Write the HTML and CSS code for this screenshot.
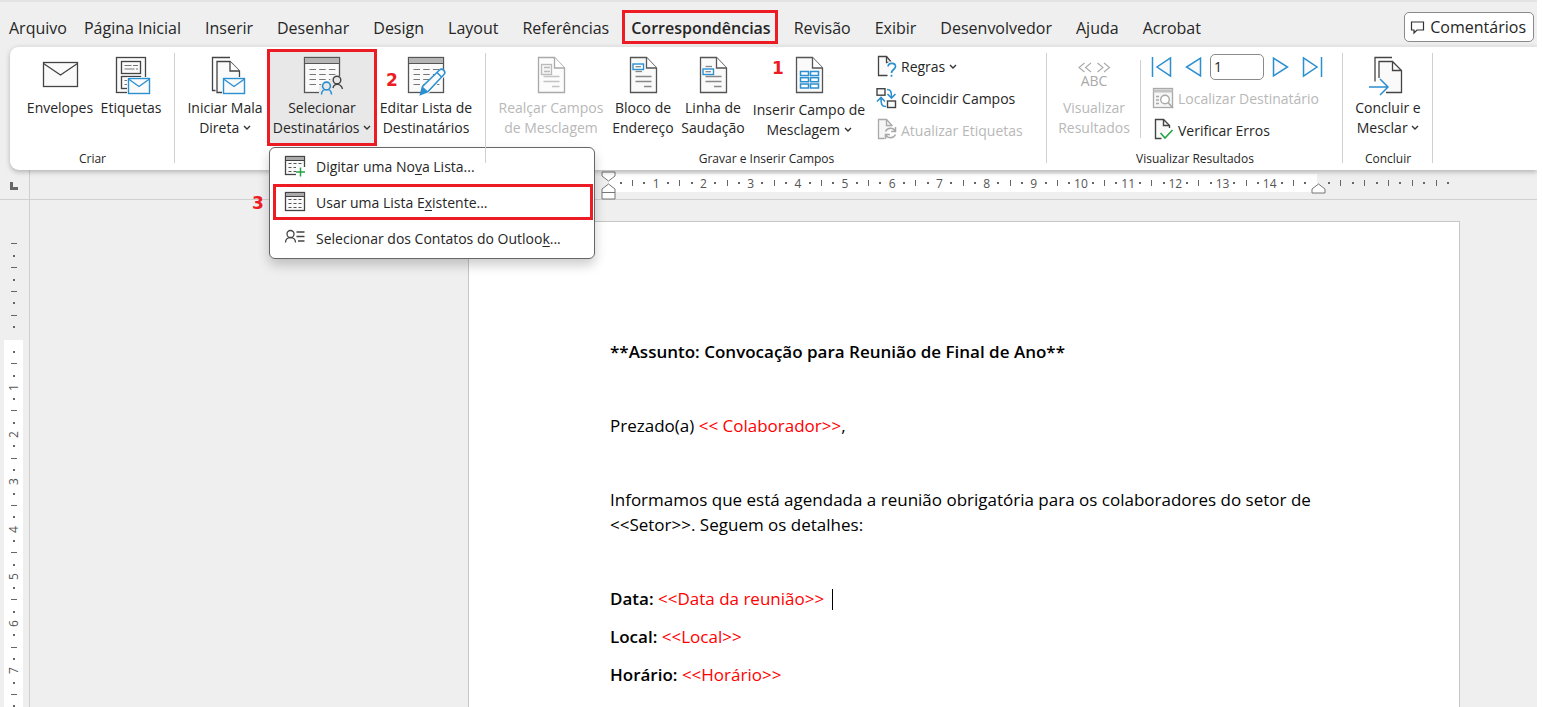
FILE: index.html
```html
<!DOCTYPE html>
<html lang="pt-BR">
<head>
<meta charset="utf-8">
<title>Correspondências</title>
<link rel="stylesheet" href="styles.css">
</head>
<body>
<svg class="defs" aria-hidden="true">
  <symbol id="chevron" viewBox="0 0 8 6"><path d="M1 1l3 3 3-3" fill="none" stroke="#333" stroke-width="1.4"/></symbol>
  <symbol id="mail" viewBox="0 0 24 18"><rect x="0" y="0" width="24" height="18" fill="#fff"/><rect x="1.5" y="1.5" width="21" height="15" fill="#fafafa" stroke="#2b8fd0" stroke-width="1.4"/><path d="M1.5 2l10.500 7.500L22.500 2" fill="none" stroke="#2b8fd0" stroke-width="1.400"/></symbol>
  <symbol id="sheet" viewBox="0 0 40 40"><path d="M7.500 1.500h16l10 10.500v24.500h-26z" fill="#fafafa" stroke="#555" stroke-width="1.300"/><path d="M23.500 1.500V12h10" fill="#fff" stroke="#555" stroke-width="1.300"/></symbol>
  <symbol id="sheet-lines" viewBox="0 0 40 40"><path d="M12.500 20.500h16M12.500 25.500h16M21 30.500h7.500" stroke="#888" stroke-width="1.300"/></symbol>
  <symbol id="grid" viewBox="0 0 40 40"><rect x="2.500" y="1.500" width="35" height="35" fill="#fafafa" stroke="#555" stroke-width="1.300"/><path d="M3 4.500h34" stroke="#b5b5b5" stroke-width="5"/><path d="M2.500 7.500h35" stroke="#555"/><path d="M7.500 13.500h26M7.500 18.500h26M7.500 23.500h26M7.500 28.500h26" stroke="#777" stroke-width="1.200" stroke-dasharray="6.500 3.200"/></symbol>
  <symbol id="grid-small" viewBox="0 0 22 22"><rect x="1.500" y="1.500" width="19" height="18" fill="#fafafa" stroke="#444" stroke-width="1.300"/><path d="M2 3.500h18" stroke="#aaa" stroke-width="3"/><path d="M1.500 5.500h19" stroke="#444"/><path d="M4.500 8.500h13M4.500 12.500h13M4.500 16.500h13" stroke="#555" stroke-width="1.200" stroke-dasharray="3 2"/></symbol>
</svg>

<div class="app">
  <header class="tabbar">
    <nav class="tabs">
      <button class="tab first">Arquivo</button>
      <button class="tab">Página Inicial</button>
      <button class="tab">Inserir</button>
      <button class="tab">Desenhar</button>
      <button class="tab">Design</button>
      <button class="tab">Layout</button>
      <button class="tab">Referências</button>
      <button class="tab active">Correspondências</button>
      <button class="tab">Revisão</button>
      <button class="tab">Exibir</button>
      <button class="tab">Desenvolvedor</button>
      <button class="tab">Ajuda</button>
      <button class="tab">Acrobat</button>
    </nav>
    <button class="comments"><svg width="15" height="15" viewBox="0 0 15 15"><path d="M1.500 2h12v8H7l-3 3v-3H1.500z" fill="none" stroke="#333" stroke-width="1.200"/></svg>Comentários</button>
  </header>

  <section class="ribbon">
    <div class="group">
      <div class="tools create">
        <button class="big w-env"><svg class="ico" viewBox="0 0 40 40"><rect x="3.500" y="6.500" width="34" height="24" fill="#fafafa" stroke="#444" stroke-width="1.300"/><path d="M3.500 7.500l17 11.500 17-11.500" fill="none" stroke="#444" stroke-width="1.300"/></svg><span>Envelopes</span></button>
        <button class="big w-lab"><svg class="ico" viewBox="0 0 40 40"><g fill="#fafafa" stroke="#444" stroke-width="1.300"><rect x="5.500" y="1.500" width="29" height="35"/><rect x="10.500" y="5.500" width="19" height="12"/><rect x="10.500" y="20.500" width="19" height="12"/></g><path d="M13.500 9.500h7M22 9.500h5M13.500 13h10M25 13h2M13.500 24.500h4M13.500 28.500h3" stroke="#777" stroke-width="1.200"/><use href="#mail" x="16" y="21" width="24" height="18"/></svg><span>Etiquetas</span></button>
      </div>
      <div class="caption">Criar</div>
    </div>

    <div class="group">
      <div class="tools start">
        <button class="big w-start"><svg class="ico" viewBox="0 0 40 40"><path d="M25 1.500H7.500v33h3" fill="none" stroke="#444" stroke-width="1.300"/><path d="M12 5.500h13l9.500 9.500v21.500H12z" fill="#fafafa" stroke="#444" stroke-width="1.300"/><path d="M25 5.500V15h9.500" fill="#fff" stroke="#444" stroke-width="1.300"/><use href="#mail" x="17" y="21" width="24" height="18"/></svg><span>Iniciar Mala<br>Direta <svg class="chev"><use href="#chevron"/></svg></span></button>
        <div class="dropdown">
          <button class="big w-sel marked"><svg class="ico" viewBox="0 0 40 40"><use href="#grid"/><path d="M17 40v-9l5-6h5l4-5h9v20z" fill="#e8e8e8"/><g fill="none" stroke="#444" stroke-width="1.400"><circle cx="35" cy="24" r="3.800"/><path d="M31 32c1-5 8-5 9.500 1"/></g><g fill="#e8e8e8" stroke="#2b8fd0" stroke-width="1.600"><path d="M19.500 38.500c0-7 10-7 10 0"/><circle cx="24.500" cy="30" r="3.900"/></g></svg><span>Selecionar<br>Destinatários <svg class="chev"><use href="#chevron"/></svg></span></button>
          <div class="menu">
            <button class="item"><svg class="mico" viewBox="0 0 22 22"><use href="#grid-small"/><path d="M12 12h10v10H12z" fill="#fff"/><path d="M16.500 12.500v9M12 17h9" stroke="#23a343" stroke-width="1.500"/></svg><span>Digitar uma No<u>v</u>a Lista...</span></button>
            <button class="item marked"><svg class="mico" viewBox="0 0 22 22"><use href="#grid-small"/></svg><span>Usar uma Lista E<u>x</u>istente...</span><b class="note n3">3</b></button>
            <button class="item"><svg class="mico" viewBox="0 0 22 22"><g fill="none" stroke="#444" stroke-width="1.300"><circle cx="6.500" cy="7" r="3.500"/><path d="M1.500 15.500c0-6.500 10-6.500 10 0M12.500 5h8M12.500 9.500h8M14 14h6.500"/></g></svg><span>Selecionar dos Contatos do Outloo<u>k</u>...</span></button>
          </div>
        </div>
        <button class="big w-edit"><svg class="ico" viewBox="0 0 40 40"><use href="#grid"/><path d="M14 39l3-9 16-16 7 0v5L23 37z" fill="#fff"/><path d="M14.500 38.500l2-8L33.500 14c3-2.500 7 2 4.500 4.500L22 35.500zM31 16.500l4.800 4.800" fill="#fafafa" stroke="#2b8fd0" stroke-width="1.500"/><path d="M14.500 38.500l2-8 5.500 5z" fill="#2b8fd0"/></svg><span>Editar Lista de<br>Destinatários</span><b class="note n2">2</b></button>
      </div>
      <div class="caption"></div>
    </div>

    <div class="group">
      <div class="tools write">
        <button class="big w-hl" disabled><svg class="ico faded" viewBox="0 0 40 40"><use href="#sheet"/><use href="#sheet-lines"/><rect x="10.500" y="8.500" width="10" height="10" fill="#eee" stroke="#777" stroke-width="1.300"/><path d="M13 11.500h6M13 15.500h6" stroke="#777" stroke-width="1.300"/></svg><span>Realçar Campos<br>de Mesclagem</span></button>
        <button class="big w-block"><svg class="ico" viewBox="0 0 40 40"><use href="#sheet"/><use href="#sheet-lines"/><path d="M12.500 15.500h6.500" stroke="#888" stroke-width="1.300"/><rect x="10" y="8" width="10.500" height="5.500" fill="#fff" stroke="#2b8fd0" stroke-width="1.400"/><path d="M12.500 10.700h5.500" stroke="#888" stroke-width="1.300"/></svg><span>Bloco de<br>Endereço</span></button>
        <button class="big w-block"><svg class="ico" viewBox="0 0 40 40"><use href="#sheet"/><use href="#sheet-lines"/><path d="M12.500 10.500h6.500" stroke="#888" stroke-width="1.300"/><rect x="10" y="13" width="10.500" height="5.500" fill="#fff" stroke="#2b8fd0" stroke-width="1.400"/><path d="M12.500 15.700h5.500" stroke="#888" stroke-width="1.300"/></svg><span>Linha de<br>Saudação</span></button>
        <button class="big w-field roomy"><svg class="ico" viewBox="0 0 40 40"><use href="#sheet"/><g fill="#fff" stroke="#2b8fd0" stroke-width="1.500"><rect x="11.500" y="15.500" width="8" height="4"/><rect x="21.500" y="15.500" width="8" height="4"/><rect x="11.500" y="21.700" width="8" height="4"/><rect x="21.500" y="21.700" width="8" height="4"/><rect x="11.500" y="28" width="8" height="4"/><rect x="21.500" y="28" width="8" height="4"/></g></svg><span>Inserir Campo de<br>Mesclagem <svg class="chev"><use href="#chevron"/></svg></span><b class="note n1">1</b></button>
        <div class="rows">
          <button class="row"><svg class="rico" viewBox="0 0 24 24"><path d="M18.500 8.500L12.500 1.500h-8v19h9" fill="#fafafa" stroke="#444" stroke-width="1.300"/><path d="M12.500 1.500v6h5" fill="none" stroke="#444" stroke-width="1.300"/><path d="M13.500 12c0-5 8-5 8-.5 0 3-4 3-4 6.500M17.500 19.500v2" fill="none" stroke="#fff" stroke-width="4"/><path d="M14 11.500c.5-4.500 7.500-4 7.500 0 0 3-4 3-4 6.500M17.500 19.800v2" fill="none" stroke="#2b8fd0" stroke-width="1.700"/></svg><span>Regras <svg class="chev"><use href="#chevron"/></svg></span></button>
          <button class="row"><svg class="rico" viewBox="0 0 24 24"><g fill="#fafafa" stroke="#444" stroke-width="1.400"><rect x="3" y="1.700" width="8" height="6.500"/><rect x="13.500" y="14" width="8" height="6.500"/></g><path d="M13 2.500c4 0 4.500 2.500 4.500 8M13.500 7l4 4 4-4M12 19.500c-4.500 0-5-2.500-5-8M3 14.500l4-4 4 4" fill="none" stroke="#2b8fd0" stroke-width="1.600"/></svg>Coincidir Campos</button>
          <button class="row" disabled><svg class="rico faded" viewBox="0 0 24 24"><path d="M18.500 8L12.500 1.500h-8v19h6" fill="#eee" stroke="#555" stroke-width="1.300"/><path d="M12.500 1.500v6h5" fill="none" stroke="#555" stroke-width="1.300"/><path d="M11.500 13.500c2-4.500 8-4 9.500-.5M21.500 9v4.500H17M21.500 16.500c-2 4.500-8 4-9.500.5M11.500 21v-4.500H16" fill="none" stroke="#555" stroke-width="1.500"/></svg>Atualizar Etiquetas</button>
        </div>
      </div>
      <div class="caption">Gravar e Inserir Campos</div>
    </div>

    <div class="group">
      <div class="tools view">
        <button class="big w-prev" disabled><svg class="ico" viewBox="0 0 40 40"><path d="M10.500 7L5 11.500l5.500 4.500M17 7l-5.500 4.500L17 16M23.500 7l5.500 4.500-5.500 4.500M30 7l5.500 4.500L30 16" fill="none" stroke="#aaa" stroke-width="1.100"/><text x="20" y="30" text-anchor="middle" class="abc">ABC</text></svg><span>Visualizar<br>Resultados</span></button>
        <i class="divider"></i>
        <div class="rows">
          <div class="record">
            <button aria-label="Primeiro registro"><svg width="21" height="22" viewBox="0 0 21 22"><path d="M1.500 1v20M19.500 2v18L6 11z" class="nav"/></svg></button>
            <button aria-label="Registro anterior"><svg width="17" height="22" viewBox="0 0 17 22"><path d="M15.500 2v18L1.500 11z" class="nav"/></svg></button>
            <input type="text" value="1" aria-label="Registro">
            <button aria-label="Próximo registro"><svg width="17" height="22" viewBox="0 0 17 22"><path d="M1.500 2v18L15.500 11z" class="nav"/></svg></button>
            <button aria-label="Último registro"><svg width="21" height="22" viewBox="0 0 21 22"><path d="M19.500 1v20M1.500 2v18L15 11z" class="nav"/></svg></button>
          </div>
          <button class="row" disabled><svg class="rico faded" viewBox="0 0 24 24"><rect x="2.500" y="1.500" width="19" height="19" fill="#eee" stroke="#555" stroke-width="1.300"/><path d="M2.500 4h19" stroke="#888" stroke-width="3"/><path d="M5 9.500h3M5 13h3M5 16.500h3" stroke="#555" stroke-width="1.400"/><circle cx="14" cy="12.500" r="4.300" fill="#fff" stroke="#555" stroke-width="1.400"/><path d="M17 15.500l5 5.500" stroke="#555" stroke-width="1.600"/></svg>Localizar Destinatário</button>
          <button class="row"><svg class="rico" viewBox="0 0 24 24"><path d="M18.500 10V7.500l-6-6h-8v19h6" fill="#fafafa" stroke="#444" stroke-width="1.400"/><path d="M12.500 1.500v6h6" fill="none" stroke="#444" stroke-width="1.400"/><path d="M9.500 15l4.500 5 7.500-8" fill="none" stroke="#23a343" stroke-width="1.600"/></svg>Verificar Erros</button>
        </div>
      </div>
      <div class="caption">Visualizar Resultados</div>
    </div>

    <div class="group">
      <div class="tools finish">
        <button class="big w-env"><svg class="ico" viewBox="0 0 40 40"><path d="M24 1.500H7v24" fill="none" stroke="#444" stroke-width="1.300"/><path d="M11 22V5.500h13.500l9 9v22H18z" fill="#fafafa"/><path d="M11 22V5.500h13.500l9 9v22H18M24.500 5.500v9h9" fill="none" stroke="#444" stroke-width="1.300"/><path d="M1 31h18M12 23l8 8-8 8" fill="none" stroke="#2b8fd0" stroke-width="1.500"/></svg><span>Concluir e<br>Mesclar <svg class="chev"><use href="#chevron"/></svg></span></button>
      </div>
      <div class="caption">Concluir</div>
    </div>
  </section>

  <main class="workspace">
    <div class="corner"><i class="tabstop"></i></div>
    <div class="hruler">
      <div class="track" data-count="59"><svg class="indent left" width="15" height="29" viewBox="0 0 15 29"><path d="M1 1h13v4l-6.500 5L1 5z" fill="#fff" stroke="#777"/><path d="M7.500 13L14 18v10H1V18zM1 21.500h13" fill="#fff" stroke="#777"/></svg><svg class="indent right" width="15" height="11" viewBox="0 0 15 11"><path d="M7.500 1L14 6v4H1V6z" fill="#fff" stroke="#777"/></svg></div>
      <div class="beyond" data-plain="11"></div>
    </div>
    <div class="vruler">
      <div class="above" data-plain="8"></div>
      <div class="track" data-count="31"></div>
    </div>
    <div class="canvas">
      <article class="page">
        <p><strong>**Assunto: Convocação para Reunião de Final de Ano**</strong></p>
        <p>Prezado(a) <em>&lt;&lt; Colaborador&gt;&gt;</em>,</p>
        <p>Informamos que está agendada a reunião obrigatória para os colaboradores do setor de &lt;&lt;Setor&gt;&gt;. Seguem os detalhes:</p>
        <p><strong>Data:</strong> <em>&lt;&lt;Data da reunião&gt;&gt;</em><i class="caret"></i></p>
        <p class="tight"><strong>Local:</strong> <em>&lt;&lt;Local&gt;&gt;</em></p>
        <p class="tight"><strong>Horário:</strong> <em>&lt;&lt;Horário&gt;&gt;</em></p>
      </article>
    </div>
  </main>
</div>
<script src="ruler.js"></script>
</body>
</html>
```
FILE: styles.css
```css
* { box-sizing: border-box; }
body { margin: 0; background: #fff; color: #262626; font-family: "Open Sans", "Noto Sans", sans-serif; font-size: 14px; }
button, input { font: inherit; color: inherit; background: none; border: 0; padding: 0; margin: 0; }
p { margin: 0; }
.defs { position: absolute; width: 0; height: 0; }

.app { display: flex; flex-direction: column; height: 100vh; margin-right: 5px; background: #efefef; overflow: hidden; }

.tabbar { display: flex; justify-content: space-between; align-items: center; height: 46px; padding: 6px 3px 0 0; border-top: 2px solid #e3e3e3; flex: none; }
.tabs { display: flex; }
.tab { height: 34px; padding: 2px 12px 0; font-size: 16px; line-height: 32px; white-space: nowrap; }
.tab.first { padding: 2px 5px 0 9px; }
.tab.active { border: 3px solid #ed1c24; padding: 2px 4px 0 6px; margin: 0 4px 0 1px; line-height: 26px; font-weight: 600; }
.comments { display: flex; align-items: center; gap: 5px; height: 30px; padding: 0 7px 0 5px; border: 1px solid #8a8a8a; border-radius: 5px; background: #fff; font-size: 16px; }

.ribbon { display: flex; flex: none; position: relative; z-index: 2; height: 124px; margin-left: 10px; padding-top: 2px; background: #fff; border-top: 1px solid #e3e3e3; border-radius: 9px 0 0 9px; box-shadow: 0 2px 5px rgba(0, 0, 0, .25); }
.group { position: relative; display: flex; flex-direction: column; padding-right: 8px; }
.group::after { content: ""; position: absolute; right: 0; top: 4px; bottom: 7px; width: 1px; background: #d0d0d0; }
.tools { display: flex; height: 97px; }
.create { padding: 0 2px 0 13px; }
.start, .write, .view, .finish { padding-left: 8px; }
.start { padding-right: 3px; }
.caption { height: 24px; padding: 2px 0 0 8px; line-height: 22px; font-size: 12px; text-align: center; }

.big { position: relative; display: flex; flex-direction: column; align-items: center; gap: 2px; height: 97px; padding-top: 7px; font-size: 14px; line-height: 20px; white-space: nowrap; }
.big.roomy { gap: 4px; }
.big.marked { padding-top: 4px; background: #e8e8e8; border: 3px solid #ed1c24; }
.big:disabled, .row:disabled { color: #b8b8b8; }
.ico { width: 40px; height: 40px; overflow: visible; flex: none; }
.faded { opacity: .5; }
.chev { width: 8px; height: 6px; vertical-align: 2px; }
.w-env { width: 74px; }
.w-lab { width: 68px; }
.w-start { width: 84px; }
.w-sel { width: 110px; }
.w-edit { width: 98px; }
.w-hl { width: 114px; }
.w-block { width: 70px; }
.w-field { width: 122px; }
.w-prev { width: 78px; }
.abc { font-size: 14px; fill: #aaa; }

.rows { display: flex; flex-direction: column; padding: 2px 0 0 4px; }
.write .rows { width: 169px; }
.view .rows { width: 194px; padding-left: 10px; }
.row { display: flex; align-items: center; gap: 3px; height: 32px; white-space: nowrap; }
.rico { width: 24px; height: 24px; flex: none; }
.divider { width: 1px; height: 78px; margin: 11px 0 0 7px; background: #d0d0d0; }
.record { display: flex; align-items: center; gap: 8px; height: 32px; }
.record button { display: flex; }
.record button:first-child, .record button:nth-last-child(2) { margin-right: 5px; }
.record input { width: 54px; height: 26px; padding-left: 3px; border: 1px solid #8a8a8a; border-radius: 5px; background: #fff; }
.nav { fill: #fafafa; stroke: #2b8fd0; stroke-width: 1.5; }

.dropdown { position: relative; }
.menu { position: absolute; left: 2px; top: 98px; width: 326px; padding: 0 1px 2px; border: 1px solid #666; border-radius: 6px; background: #fff; box-shadow: 0 6px 12px rgba(0, 0, 0, .2); }
.item { position: relative; display: flex; align-items: center; gap: 10px; width: 320px; height: 36px; margin-left: 2px; padding-left: 11px; text-align: left; white-space: nowrap; }
.item.marked { border: 3px solid #ed1c24; padding-left: 8px; }
.mico { width: 22px; height: 22px; }
.item u { text-underline-offset: 2px; }

.note { position: absolute; color: #ed1c24; font: bold 17px/20px "DejaVu Sans", sans-serif; }
.n1 { left: 24px; top: 9px; }
.n2 { left: 9px; top: 21px; }
.n3 { left: -24px; top: 6px; }

.workspace { flex: 1; min-height: 0; display: grid; grid-template: 30px 1fr / 30px 1fr; }
.corner { border: solid #d0d0d0; border-width: 0 1px 1px 0; padding: 12px 0 0 10px; }
.tabstop { display: block; width: 8px; height: 8px; border: solid #666; border-width: 0 0 3px 3px; }
.hruler { display: flex; align-items: flex-start; border-bottom: 1px solid #d0d0d0; padding: 4px 0 0 579px; font-size: 12px; color: #555; }
.hruler .track { position: relative; display: flex; width: 708px; height: 18px; padding: 0 6px; background: #fff; }
.beyond { display: flex; width: 131px; height: 18px; margin-left: 6px; }
.mark { flex: 1 1 0; min-width: 0; min-height: 0; display: flex; align-items: center; justify-content: center; }
.dot::before { content: ""; width: 2px; height: 2px; background: #666; }
.tick::before { content: ""; width: 1px; height: 6px; background: #666; }
.indent { position: absolute; }
.indent.left { left: -8px; top: -3px; }
.indent.right { right: -9px; top: 9px; }

.vruler { display: flex; flex-direction: column; border-right: 1px solid #d0d0d0; padding: 38px 6px 0 4px; overflow: hidden; font-size: 12px; color: #555; }
.above { display: flex; flex-direction: column; flex: none; height: 95px; margin-bottom: 7px; }
.vruler .track { display: flex; flex-direction: column; flex: none; height: 378px; padding: 6px 0; background: #fff; }
.vruler .tick::before { width: 6px; height: 1px; }
.vruler .num span { transform: rotate(-90deg); }

.canvas { min-height: 0; overflow: hidden; padding: 21px 77px 0 438px; }
.page { height: 600px; padding: 117px 142px 0 141px; background: #fff; border: 1px solid #c6c6c6; color: #000; font-family: "Open Sans", "Noto Sans", sans-serif; font-size: 17px; line-height: 25px; }
.page p + p { margin-top: 49px; }
.page p.tight { margin-top: 13px; }
.page em { font-style: normal; color: #f00; }
.page strong { font-weight: 600; }
.caret { display: inline-block; width: 1px; height: 21px; margin-left: 8px; background: #000; vertical-align: -5px; }
```
FILE: ruler.js
```js
function addMark(parent, kind, text) {
  const mark = document.createElement("span");
  mark.className = "mark " + kind;
  if (text) {
    const label = document.createElement("span");
    label.textContent = text;
    mark.append(label);
  }
  parent.append(mark);
}

// Each centimetre has a dot, a half tick, a dot and then its number.
document.querySelectorAll("[data-count]").forEach((track) => {
  for (let i = 1; i <= Number(track.dataset.count); i++) {
    if (i % 4 === 0) addMark(track, "num", String(i / 4));
    else addMark(track, i % 2 ? "dot" : "tick");
  }
});

const vertical = document.querySelector(".above");
document.querySelectorAll("[data-plain]").forEach((track) => {
  const first = track === vertical ? 0 : 1;
  for (let i = 0; i < Number(track.dataset.plain); i++) {
    addMark(track, i % 2 === first ? "tick" : "dot");
  }
});
```
